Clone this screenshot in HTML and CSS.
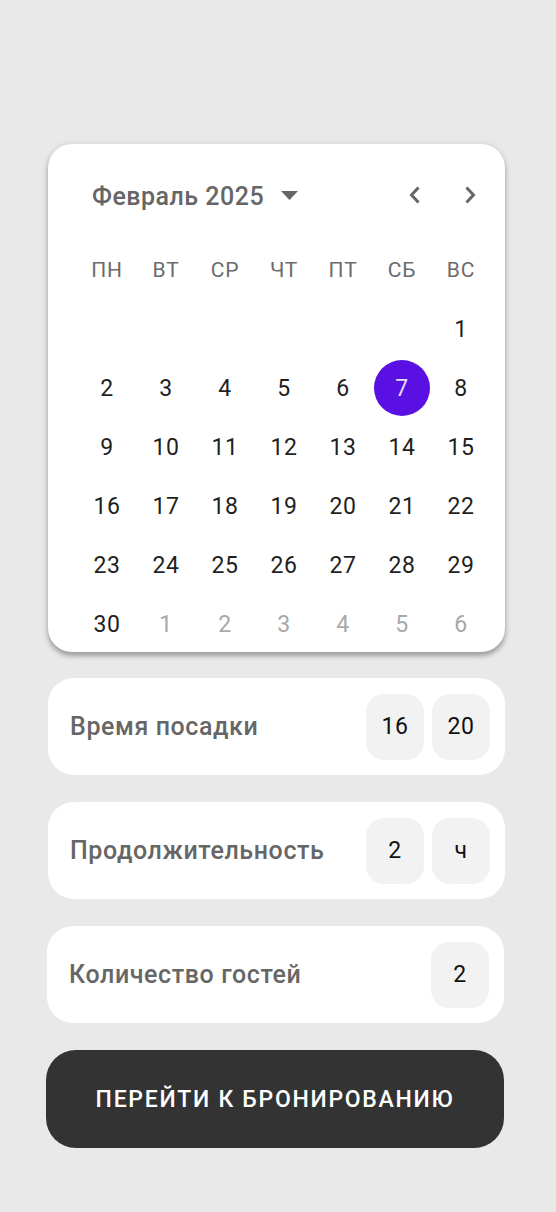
FILE: index.html
```html
<!DOCTYPE html>
<html lang="ru">
<head>
<meta charset="utf-8">
<title>Бронирование</title>
<link rel="stylesheet" href="styles.css">
</head>
<body>
<main class="page">
  <section class="calendar">
    <div class="cal-header">
      <div class="month">
        <span class="month-label">Февраль 2025</span>
        <svg class="caret" width="17" height="9" viewBox="0 0 17 9"><path d="M0 0H17L8.5 9Z" fill="#666"/></svg>
      </div>
      <div class="nav">
        <button class="nav-btn" aria-label="prev"><svg width="14" height="20" viewBox="0 0 14 20"><path d="M10.5 2.5 3.5 10l7 7.5" fill="none" stroke="#666" stroke-width="3"/></svg></button>
        <button class="nav-btn" aria-label="next"><svg width="14" height="20" viewBox="0 0 14 20"><path d="M3.5 2.5 10.5 10l-7 7.5" fill="none" stroke="#666" stroke-width="3"/></svg></button>
      </div>
    </div>
    <div class="weekdays">
      <span>ПН</span><span>ВТ</span><span>СР</span><span>ЧТ</span><span>ПТ</span><span>СБ</span><span>ВС</span>
    </div>
    <div class="days">
      <span></span><span></span><span></span><span></span><span></span><span></span><span class="day">1</span>
      <span class="day">2</span><span class="day">3</span><span class="day">4</span><span class="day">5</span><span class="day">6</span><span class="day selected">7</span><span class="day">8</span>
      <span class="day">9</span><span class="day">10</span><span class="day">11</span><span class="day">12</span><span class="day">13</span><span class="day">14</span><span class="day">15</span>
      <span class="day">16</span><span class="day">17</span><span class="day">18</span><span class="day">19</span><span class="day">20</span><span class="day">21</span><span class="day">22</span>
      <span class="day">23</span><span class="day">24</span><span class="day">25</span><span class="day">26</span><span class="day">27</span><span class="day">28</span><span class="day">29</span>
      <span class="day">30</span><span class="day muted">1</span><span class="day muted">2</span><span class="day muted">3</span><span class="day muted">4</span><span class="day muted">5</span><span class="day muted">6</span>
    </div>
  </section>

  <section class="field">
    <span class="field-label">Время посадки</span>
    <div class="boxes"><span class="box">16</span><span class="box">20</span></div>
  </section>

  <section class="field">
    <span class="field-label">Продолжительность</span>
    <div class="boxes"><span class="box">2</span><span class="box">ч</span></div>
  </section>

  <section class="field field-guests">
    <span class="field-label">Количество гостей</span>
    <div class="boxes"><span class="box">2</span></div>
  </section>

  <button class="cta">ПЕРЕЙТИ К БРОНИРОВАНИЮ</button>
</main>
</body>
</html>
```

FILE: styles.css
```css
* { box-sizing: border-box; }
html, body { margin: 0; padding: 0; }
body {
  background: #e9e9e9;
  font-family: Roboto, "Noto Sans", "Liberation Sans", sans-serif;
  width: 556px;
  height: 1212px;
}
.page {
  width: 457px;
  margin-left: 48px;
  padding-top: 144px;
  display: flex;
  flex-direction: column;
}
.calendar {
  background: #fff;
  border-radius: 24px;
  box-shadow: 0 4px 5px rgba(0,0,0,0.28), 0 1px 8px rgba(0,0,0,0.10);
  padding: 23px 16px 0 31px;
  height: 508px;
}
.cal-header {
  height: 56px;
  display: flex;
  align-items: center;
  justify-content: space-between;
}
.month {
  display: flex;
  align-items: center;
  gap: 17px;
  padding-left: 13px;
}
.month-label {
  font-size: 25px;
  font-weight: 500;
  color: #666;
  letter-spacing: 0.5px;
  margin-top: 2px;
}
.caret { margin-top: 1px; }
.nav {
  display: flex;
  gap: 41px;
  margin-right: 12px;
}
.nav-btn {
  border: 0;
  background: none;
  padding: 0;
  width: 14px;
  height: 20px;
  display: flex;
}
.weekdays {
  margin-top: 27px;
  height: 40px;
  display: grid;
  grid-template-columns: repeat(7, 56px);
  column-gap: 3px;
  align-items: center;
  justify-items: center;
  font-size: 21px;
  letter-spacing: 0.8px;
  color: #6b6b6b;
}
.days {
  margin-top: 11px;
  display: grid;
  grid-template-columns: repeat(7, 56px);
  grid-auto-rows: 56px;
  gap: 3px;
}
.day {
  display: flex;
  align-items: center;
  justify-content: center;
  font-size: 23px;
  letter-spacing: 0.5px;
  color: #1f1f1f;
  border-radius: 50%;
}
.day.muted { color: #a8a8a8; }
.day.selected {
  background: #5a10e2;
  color: #e4dcf7;
}
.field {
  margin-top: 26px;
  height: 97px;
  background: #fff;
  border-radius: 26px;
  display: flex;
  align-items: center;
  justify-content: space-between;
  padding: 0 15px 0 22px;
}
.field + .field { margin-top: 27px; }
.field-guests { margin-left: -1px; margin-right: 1px; }
.field-label {
  font-size: 25px;
  font-weight: 500;
  letter-spacing: 0.6px;
  color: #666;
}
.boxes {
  display: flex;
  gap: 8px;
}
.box {
  width: 58px;
  height: 66px;
  border-radius: 18px;
  background: #f2f2f2;
  display: flex;
  align-items: center;
  justify-content: center;
  font-size: 23px;
  letter-spacing: 0.5px;
  color: #111;
}
.cta {
  margin-top: 27px;
  margin-left: -2px;
  width: 458px;
  height: 98px;
  border: 0;
  border-radius: 30px;
  background: #333;
  color: #fff;
  font-family: Roboto, "Noto Sans", "Liberation Sans", sans-serif;
  font-size: 23px;
  font-weight: 500;
  letter-spacing: 1.7px;
}
```
